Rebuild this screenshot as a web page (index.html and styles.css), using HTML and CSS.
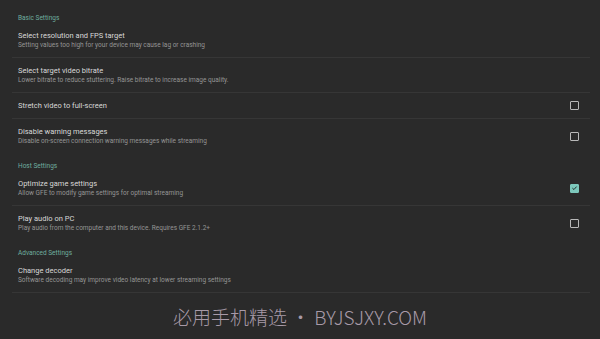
FILE: index.html
```html
<!DOCTYPE html>
<html lang="en">
<head>
  <meta charset="UTF-8">
  <meta name="viewport" content="width=device-width, initial-scale=1.0">
  <title>Settings</title>
  <link rel="stylesheet" href="styles.css">
</head>
<body>
  <main class="settings">
    <div class="category">Basic Settings</div>
    <div class="pref">
      <div class="pref-text">
        <div class="pref-title">Select resolution and FPS target</div>
        <div class="pref-summary">Setting values too high for your device may cause lag or crashing</div>
      </div>
    </div>
    <div class="pref">
      <div class="pref-text">
        <div class="pref-title">Select target video bitrate</div>
        <div class="pref-summary">Lower bitrate to reduce stuttering. Raise bitrate to increase image quality.</div>
      </div>
    </div>
    <div class="pref">
      <div class="pref-text">
        <div class="pref-title">Stretch video to full-screen</div>
      </div>
      <span class="check"></span>
    </div>
    <div class="pref last">
      <div class="pref-text">
        <div class="pref-title">Disable warning messages</div>
        <div class="pref-summary">Disable on-screen connection warning messages while streaming</div>
      </div>
      <span class="check"></span>
    </div>

    <div class="category">Host Settings</div>
    <div class="pref">
      <div class="pref-text">
        <div class="pref-title">Optimize game settings</div>
        <div class="pref-summary">Allow GFE to modify game settings for optimal streaming</div>
      </div>
      <span class="check on">
        <svg viewBox="0 0 10 10" width="8" height="8"><path d="M2 5.2 L4.2 7.2 L8 3" fill="none" stroke="#1f2a28" stroke-width="1.4"/></svg>
      </span>
    </div>
    <div class="pref last">
      <div class="pref-text">
        <div class="pref-title">Play audio on PC</div>
        <div class="pref-summary">Play audio from the computer and this device. Requires GFE 2.1.2+</div>
      </div>
      <span class="check"></span>
    </div>

    <div class="category">Advanced Settings</div>
    <div class="pref">
      <div class="pref-text">
        <div class="pref-title">Change decoder</div>
        <div class="pref-summary">Software decoding may improve video latency at lower streaming settings</div>
      </div>
    </div>
  </main>
  <div class="watermark">必用手机精选 • BYJSJXY.COM</div>
</body>
</html>
```

FILE: styles.css
```css
body {
  margin: 0;
  background-color: #2a2a2a;
  font-family: Roboto, "Noto Sans", sans-serif;
  overflow: hidden;
  height: 339px;
  position: relative;
}
.settings {
  padding-top: 5px;
}
.category {
  padding: 9px 0 1px 18px;
  line-height: 8px;
  font-size: 6.5px;
  color: #6fae9f;
}
.pref {
  display: flex;
  align-items: center;
  margin: 0 10px 0 12px;
  padding: 7px 11px 7px 6px;
  border-bottom: 1px solid #363636;
}
.pref.last {
  border-bottom: none;
}
.pref-text {
  flex: 1;
}
.pref-title {
  font-size: 7.5px;
  line-height: 11px;
  color: #d8d8d8;
}
.pref-summary {
  font-size: 6.5px;
  line-height: 9px;
  color: #959595;
}
.check {
  width: 7px;
  height: 7px;
  border: 1px solid #b8b8b8;
  border-radius: 1px;
  display: flex;
  align-items: center;
  justify-content: center;
}
.check.on {
  background-color: #7cc7bb;
  border-color: #7cc7bb;
}
.watermark {
  position: absolute;
  left: 0;
  right: 0;
  top: 303px;
  text-align: center;
  font-family: "Noto Sans CJK SC", "Noto Sans", sans-serif;
  font-size: 19px;
  font-weight: 300;
  color: #a89aa8;
}
```
